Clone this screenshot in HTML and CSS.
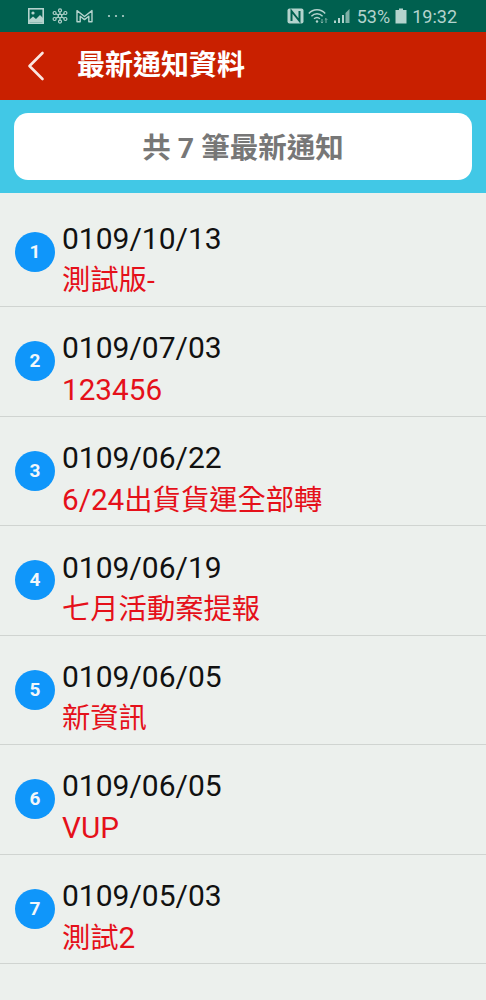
FILE: index.html
```html
<!DOCTYPE html>
<html lang="zh-Hant">
<head>
    <meta charset="UTF-8">
    <title>最新通知資料</title>
    <link rel="stylesheet" href="styles.css">
</head>
<body>
    <div class="status-bar">
        <div class="status-left">
            <svg class="ico" width="16" height="16" viewBox="0 0 16 16"><rect x="0.8" y="0.8" width="14.4" height="14.4" fill="none" stroke="#b4d3cd" stroke-width="1.6"/><path d="M1 14.5 V12 L5 8.5 L8 11 L12 7 L15 10 V14.5Z" fill="#b4d3cd"/><circle cx="5" cy="5" r="1.6" fill="#b4d3cd"/></svg>
            <svg class="ico" width="16" height="16" viewBox="0 0 16 16" fill="none" stroke="#b4d3cd" stroke-width="1.2"><path d="M8 3.5 V12.5 M3.5 5.5 L12.5 10.5 M12.5 5.5 L3.5 10.5"/><circle cx="8" cy="8" r="1.8" fill="#00604f"/><circle cx="8" cy="2.4" r="1.5" fill="#00604f"/><circle cx="8" cy="13.6" r="1.5" fill="#00604f"/><circle cx="2.6" cy="5" r="1.5" fill="#00604f"/><circle cx="13.4" cy="5" r="1.5" fill="#00604f"/><circle cx="2.6" cy="11" r="1.5" fill="#00604f"/><circle cx="13.4" cy="11" r="1.5" fill="#00604f"/></svg>
            <svg class="ico" width="17" height="14" viewBox="0 0 17 14" fill="none" stroke="#b4d3cd" stroke-width="1.4" stroke-linejoin="round"><path d="M1 12.8 V1.6 L8.5 7.5 L16 1.6 V12.8 H12.8 V7.2 L8.5 10.6 L4.2 7.2 V12.8Z"/></svg>
            <svg class="dots" width="18" height="4" viewBox="0 0 18 4" fill="#b4d3cd"><circle cx="2" cy="2" r="1.1"/><circle cx="9" cy="2" r="1.1"/><circle cx="16" cy="2" r="1.1"/></svg>
        </div>
        <div class="status-right">
            <svg class="ico" width="17" height="16" viewBox="0 0 17 16"><rect x="0.5" y="0.5" width="16" height="15" rx="2" fill="#b4d3cd"/><path d="M4.5 13 V3 L12.5 13 V3" fill="none" stroke="#00604f" stroke-width="2"/></svg>
            <svg class="ico" width="21" height="16" viewBox="0 0 21 16" fill="none" stroke="#b4d3cd" stroke-width="1.4"><path d="M0.8 5.5 C5 0.5 13 0.5 17.2 5.5"/><path d="M3.4 8.2 C6.5 5 11.5 5 14.6 8.2"/><path d="M6 10.8 C7.8 9.2 10.2 9.2 12 10.8"/><circle cx="9" cy="13.5" r="1.2" fill="#b4d3cd" stroke="none"/><path d="M14 11 V15 M12.8 13.8 L14 15 L15.2 13.8 M18 15 V10.5 M16.8 11.7 L18 10.5 L19.2 11.7" stroke="#7fb0a6" stroke-width="1"/></svg>
            <svg class="ico" width="17" height="16" viewBox="0 0 17 16"><path d="M1 15 H3 V12.5 H1Z M5 15 H7 V10 H5Z M9 15 H11 V7 H9Z" fill="#b4d3cd"/><path d="M12.5 15 H16.5 V1 L12.5 5Z" fill="#7fb0a6"/></svg>
            <span class="pct">53%</span>
            <svg class="ico" width="12" height="16" viewBox="0 0 12 16"><path d="M4 0.5 H8 V2 H11.5 V15.5 H0.5 V2 H4Z" fill="#b4d3cd"/></svg>
            <span class="time">19:32</span>
        </div>
    </div>

    <div class="title-bar">
        <svg class="back" width="18" height="30" viewBox="0 0 18 30" fill="none" stroke="#fbe6e0" stroke-width="2.6" stroke-linecap="round" stroke-linejoin="round"><path d="M15.5 2 L2.5 15 L15.5 28"/></svg>
        <h1>最新通知資料</h1>
    </div>

    <div class="count-bar">
        <div class="count-box">共 7 筆最新通知</div>
    </div>

    <ul class="notice-list">
        <li class="notice">
            <span class="num">1</span>
            <div class="notice-text"><div class="date">0109/10/13</div><div class="msg">測試版-</div></div>
        </li>
        <li class="notice">
            <span class="num">2</span>
            <div class="notice-text"><div class="date">0109/07/03</div><div class="msg"><span class="latin">123456</span></div></div>
        </li>
        <li class="notice">
            <span class="num">3</span>
            <div class="notice-text"><div class="date">0109/06/22</div><div class="msg"><span class="latin">6/24</span>出貨貨運全部轉</div></div>
        </li>
        <li class="notice">
            <span class="num">4</span>
            <div class="notice-text"><div class="date">0109/06/19</div><div class="msg">七月活動案提報</div></div>
        </li>
        <li class="notice">
            <span class="num">5</span>
            <div class="notice-text"><div class="date">0109/06/05</div><div class="msg">新資訊</div></div>
        </li>
        <li class="notice">
            <span class="num">6</span>
            <div class="notice-text"><div class="date">0109/06/05</div><div class="msg"><span class="latin">VUP</span></div></div>
        </li>
        <li class="notice">
            <span class="num">7</span>
            <div class="notice-text"><div class="date">0109/05/03</div><div class="msg">測試<span class="latin">2</span></div></div>
        </li>
    </ul>
</body>
</html>
```

FILE: styles.css
```css
html,body{margin:0;padding:0;}
body{
    height:1000px;
    overflow:hidden;
    background-color:#ecf0ed;
    font-family:Roboto,"Noto Sans CJK TC",sans-serif;
}
ul,li{margin:0;padding:0;list-style:none;}
h1{margin:0;}

.status-bar{
    display:flex;
    justify-content:space-between;
    align-items:center;
    height:32px;
    padding:0 29px 0 28px;
    background-color:#00604f;
    color:#b4d3cd;
    font-size:18px;
}
.status-left,
.status-right{
    display:flex;
    align-items:center;
}
.status-left{gap:8px;}
.status-right{gap:4px;}
.ico{display:block;}
.dots{display:block;margin-left:6px;}
.pct{margin:0 1px 0 3px;}
.time{margin-left:1px;}

.title-bar{
    display:flex;
    align-items:center;
    height:68px;
    padding-left:27px;
    background-color:#c92000;
}
.title-bar h1{
    margin-left:32px;
    color:#fff;
    font-size:28px;
    font-weight:700;
    line-height:72px;
}

.count-bar{
    padding:13px 14px;
    background-color:#41c8e6;
}
.count-box{
    height:67px;
    border-radius:14px;
    background-color:#fff;
    color:#777;
    font-size:28.5px;
    font-weight:700;
    line-height:71px;
    text-align:center;
}

.notice-list{padding-top:4.5px;}
.notice{
    display:flex;
    align-items:center;
    height:108.5px;
    padding-left:15px;
    border-bottom:1px solid #d0d4d1;
}
.num{
    flex:none;
    width:40px;
    height:40px;
    margin-right:7px;
    border-radius:50%;
    background-color:#0f96fa;
    color:#f2f7fa;
    font-size:19px;
    font-weight:700;
    line-height:40px;
    text-align:center;
}
.notice-text{padding-top:17px;}
.date{
    color:#111;
    font-size:30px;
    line-height:42px;
}
.msg{
    color:#e5101a;
    font-size:28.3px;
    line-height:42px;
}
.latin{font-size:29.7px;}
```
